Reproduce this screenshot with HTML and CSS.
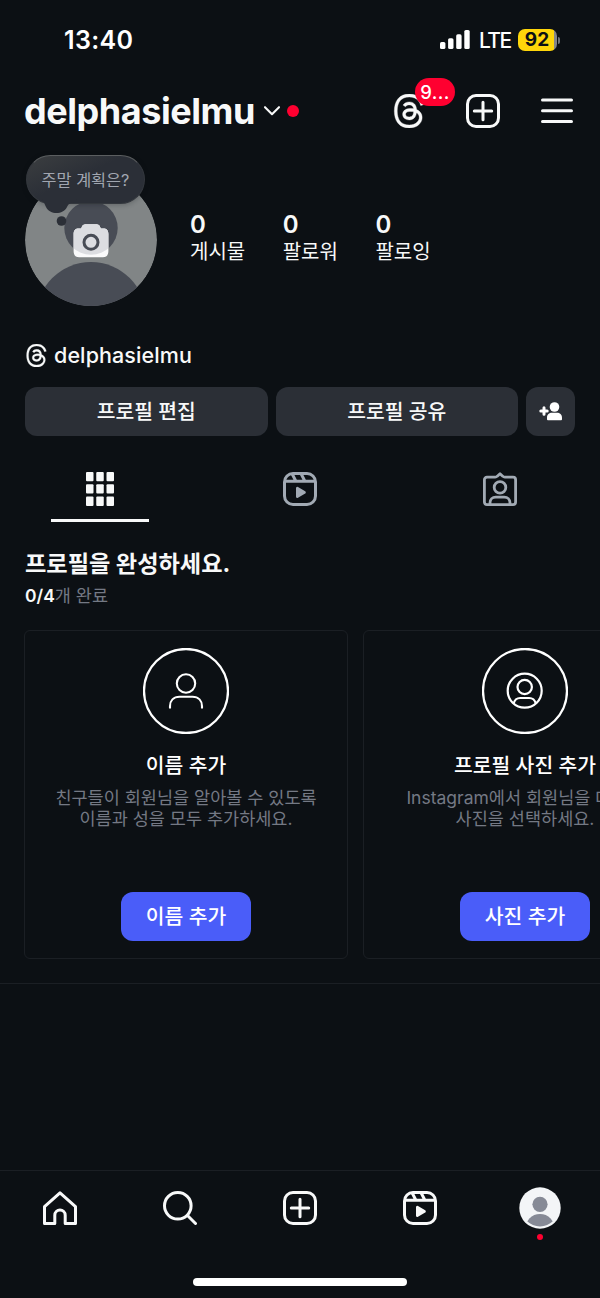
FILE: index.html
```html
<!DOCTYPE html>
<html lang="ko">
<head>
<meta charset="utf-8">
<title>delphasielmu</title>
<link rel="stylesheet" href="styles.css">
</head>
<body>
<svg class="defs" width="0" height="0" aria-hidden="true">
  <symbol id="threads" viewBox="0 0 192 192"><path d="M141.537 88.9883C140.71 88.5919 139.87 88.2104 139.019 87.8451C137.537 60.5382 122.616 44.905 97.5619 44.745C97.4484 44.7443 97.3355 44.7443 97.222 44.7443C82.2364 44.7443 69.7731 51.1409 62.102 62.7807L75.881 72.2328C81.6116 63.5383 90.6052 61.6848 97.2286 61.6848C97.3051 61.6848 97.3819 61.6848 97.4576 61.6855C105.707 61.7381 111.932 64.1366 115.961 68.814C118.893 72.2193 120.854 76.925 121.825 82.8638C114.511 81.6207 106.601 81.2385 98.145 81.7233C74.3247 83.0954 59.0111 96.9879 60.0396 116.292C60.5615 126.084 65.4397 134.508 73.775 140.011C80.8224 144.663 89.899 146.938 99.3323 146.423C111.79 145.74 121.563 140.987 128.381 132.296C133.559 125.696 136.834 117.143 138.28 106.366C144.217 109.949 148.617 114.664 151.047 120.332C155.179 129.967 155.42 145.8 142.501 158.708C131.182 170.016 117.576 174.908 97.0135 175.059C74.2042 174.89 56.9538 167.575 45.7381 153.317C35.2355 139.966 29.8077 120.682 29.6052 96C29.8077 71.3178 35.2355 52.0336 45.7381 38.6827C56.9538 24.4249 74.2039 17.11 97.0132 16.9405C119.988 17.1113 137.539 24.4614 149.184 38.788C154.894 45.8136 159.199 54.6488 162.037 64.9503L178.184 60.6422C174.744 47.9622 169.331 37.0357 161.965 27.974C147.036 9.60668 125.202 0.195148 97.0695 0H96.9569C68.8816 0.19447 47.2921 9.6418 32.7883 28.0793C19.8819 44.4864 13.2244 67.3157 13.0007 95.9325L13 96L13.0007 96.0675C13.2244 124.684 19.8819 147.514 32.7883 163.921C47.2921 182.358 68.8816 191.806 96.9569 192H97.0695C122.03 191.827 139.624 185.292 154.118 170.811C173.081 151.866 172.51 128.119 166.26 113.541C161.776 103.087 153.227 94.5962 141.537 88.9883ZM98.4405 129.507C88.0005 130.095 77.1544 125.409 76.6196 115.372C76.2232 107.93 81.9158 99.626 99.0812 98.6368C101.047 98.5234 102.976 98.468 104.871 98.468C111.106 98.468 116.939 99.0737 122.242 100.233C120.264 124.935 108.662 128.946 98.4405 129.507Z" fill="currentColor" stroke="currentColor" stroke-width="2"/></symbol>
  <symbol id="plus-box" viewBox="0 0 34 34"><g fill="none" stroke="currentColor" stroke-width="3"><rect x="1.5" y="1.5" width="31" height="31" rx="8.5"/><path d="M17 8.3v17.4M8.3 17h17.4" stroke-linecap="round"/></g></symbol>
  <symbol id="reels" viewBox="0 0 34 34"><g fill="none" stroke="currentColor" stroke-width="3"><rect x="1.5" y="1.5" width="31" height="31" rx="8.5"/><path d="M2 9.3h30M9.2 2l3.6 7M18.2 2l3.6 7"/></g><path d="M13 16.1v8.6a1.3 1.3 0 0 0 2 1.1l7.2-4.3a1.3 1.3 0 0 0 0-2.2L15 15a1.3 1.3 0 0 0-2 1.1z" fill="currentColor"/></symbol>
</svg>

<div class="screen">
  <div class="status">
    <span class="clock">13:40</span>
    <div class="status-right">
      <svg width="31" height="20" viewBox="0 0 31 20" fill="#fff"><rect x="0" y="12" width="5.4" height="7" rx="1.6"/><rect x="8.1" y="8.2" width="5.4" height="10.8" rx="1.6"/><rect x="16.2" y="4.3" width="5.4" height="14.7" rx="1.6"/><rect x="24.3" y="0" width="5.4" height="19" rx="1.6"/></svg>
      <span class="net">LTE</span>
      <div class="battery"><span class="level">92</span></div>
      <i class="battery-tip"></i>
    </div>
  </div>

  <header class="header">
    <h1 class="username">delphasielmu</h1>
    <svg class="chevron" width="18" height="12" viewBox="0 0 18 12" fill="none" stroke="#f8f9f9" stroke-width="2.1" stroke-linecap="round" stroke-linejoin="round"><path d="M2 2.2l7 7 7-7"/></svg>
    <i class="red-dot"></i>
    <div class="header-actions">
      <div class="threads-button">
        <svg width="34" height="34"><use href="#threads"/></svg>
        <span class="badge">9...</span>
      </div>
      <svg class="add" width="34" height="34"><use href="#plus-box"/></svg>
      <svg width="32" height="26" viewBox="0 0 32 26" stroke="#f8f9f9" stroke-width="3" stroke-linecap="round"><path d="M1.5 2h29M1.5 12.8h29M1.5 23.6h29"/></svg>
    </div>
  </header>

  <section class="profile">
    <div class="avatar">
      <svg width="132" height="132" viewBox="0 0 132 132">
        <defs>
          <clipPath id="disc"><circle cx="66" cy="66" r="66"/></clipPath>
          <clipPath id="head"><circle cx="66" cy="54" r="26.7"/></clipPath>
        </defs>
        <g clip-path="url(#disc)">
          <circle cx="66" cy="66" r="66" fill="#818586"/>
          <circle cx="66" cy="54" r="26.7" fill="#484c55"/>
          <circle cx="66" cy="142.8" r="54.8" fill="#484c55"/>
        </g>
        <path d="M54 54.5h2.2c1.2-3.6 2.2-4.2 5-4.2h9.6c2.8 0 3.8.6 5 4.2H78c4 0 5.400 2 5.400 5.500V77c0 4-1.8 6.2-5.6 6.2H54.2c-3.8 0-5.6-2.2-5.6-6.2V60c0-3.5 1.4-5.5 5.4-5.5z" fill="#fafafb"/>
        <path d="M54 54.5h2.2c1.2-3.6 2.2-4.2 5-4.2h9.600c2.8 0 3.8.6 5 4.2H78c4 0 5.4 2 5.4 5.5V77c0 4-1.8 6.2-5.6 6.2H54.2c-3.8 0-5.6-2.2-5.6-6.2V60c0-3.5 1.4-5.5 5.4-5.5z" fill="#dcdde1" clip-path="url(#head)"/>
        <circle cx="66" cy="68.3" r="7" fill="#dcdde1" stroke="#484c55" stroke-width="3"/>
      </svg>
      <div class="note">
        <svg class="note-tail" width="40" height="36" viewBox="0 0 40 36" fill="#2b2f37"><path d="M4 0C7 1 7 4 9 8c4 8 17 8 21 0 1.5-3 3-4.500 7-4.500L40 0z"/><circle cx="24.5" cy="22" r="4.8"/></svg>
        <span class="note-text">주말 계획은?</span>
      </div>
    </div>
    <dl class="stats">
      <div class="stat"><dd>0</dd><dt>게시물</dt></div>
      <div class="stat"><dd>0</dd><dt>팔로워</dt></div>
      <div class="stat"><dd>0</dd><dt>팔로잉</dt></div>
    </dl>
  </section>

  <div class="threads-link">
    <svg width="23" height="23"><use href="#threads"/></svg>
    <span>delphasielmu</span>
  </div>

  <div class="actions">
    <button class="button wide">프로필 편집</button>
    <button class="button wide">프로필 공유</button>
    <button class="button square">
      <svg width="24" height="20" viewBox="0 0 24 20" fill="#fff"><circle cx="15.5" cy="5" r="4.8"/><path d="M8 17.3v-1.500c0-3.2 2.2-5 5-5h5c2.8 0 5 1.8 5 5v1.500c0 .6-.3.9-.9.9H8.900c-.6 0-.9-.3-.9-.9z"/><path d="M5 5.800v6.400M1.800 9h6.400" stroke="#fff" stroke-width="3" stroke-linecap="round"/></svg>
    </button>
  </div>

  <nav class="tabs">
    <div class="tab active">
      <svg width="28" height="34" viewBox="0 0 28 34" fill="#f8f9f9"><rect width="7.5" height="9.3" rx="1"/><rect x="10.25" width="7.5" height="9.3" rx="1"/><rect x="20.5" width="7.5" height="9.3" rx="1"/><rect y="12.3" width="7.5" height="9.3" rx="1"/><rect x="10.25" y="12.3" width="7.5" height="9.3" rx="1"/><rect x="20.5" y="12.3" width="7.5" height="9.3" rx="1"/><rect y="24.6" width="7.5" height="9.3" rx="1"/><rect x="10.25" y="24.6" width="7.5" height="9.3" rx="1"/><rect x="20.5" y="24.6" width="7.5" height="9.3" rx="1"/></svg>
    </div>
    <div class="tab"><svg width="34" height="34"><use href="#reels"/></svg></div>
    <div class="tab">
      <svg width="34" height="34" viewBox="0 0 34 34" fill="none" stroke="currentColor" stroke-width="2.8" stroke-linejoin="round"><path d="M4 5.200h8.200c1 0 1.500-.3 2.100-1L17 1.700l2.700 2.500c.6.7 1.100 1 2.100 1H30c1.600 0 2.600 1 2.600 2.600V30c0 1.600-1 2.600-2.600 2.600H4c-1.600 0-2.600-1-2.600-2.600V7.800c0-1.600 1-2.600 2.600-2.600z"/><circle cx="17" cy="15.4" r="5.800"/><path d="M7 32v-1c0-3.600 2.400-5.800 5.800-5.800h8.400c3.400 0 5.800 2.200 5.800 5.800v1"/></svg>
    </div>
  </nav>

  <section class="complete">
    <h2>프로필을 완성하세요.</h2>
    <p class="progress"><b>0/4</b>개 완료</p>
    <div class="cards">
      <article class="card">
        <svg width="86" height="86" viewBox="0 0 86 86" fill="none" stroke="#fff" stroke-width="2.3"><circle cx="43" cy="43" r="42"/><g stroke-width="2.1"><circle cx="43" cy="35.500" r="9.200"/><path d="M27 60.500v-2.200c0-5.700 3.500-9.600 9.500-9.600h13c6 0 9.500 3.900 9.500 9.600v2.200"/></g></svg>
        <h3>이름 추가</h3>
        <p>친구들이 회원님을 알아볼 수 있도록<br>이름과 성을 모두 추가하세요.</p>
        <button class="cta">이름 추가</button>
      </article>
      <article class="card">
        <svg width="86" height="86" viewBox="0 0 86 86" fill="none" stroke="#fff" stroke-width="2.3"><circle cx="43" cy="43" r="42"/><g stroke-width="2.2"><circle cx="42.700" cy="42.700" r="17"/><circle cx="42.700" cy="39" r="7.200"/><path d="M31.700 55.300c1-3.600 3.500-5.300 6.500-5.300h9c3 0 5.500 1.700 6.500 5.300"/></g></svg>
        <h3>프로필 사진 추가</h3>
        <p>Instagram에서 회원님을 대표할<br>사진을 선택하세요.</p>
        <button class="cta">사진 추가</button>
      </article>
    </div>
  </section>

  <footer class="dock">
    <nav class="dock-items">
      <div class="dock-item"><svg width="34" height="34" viewBox="0 0 34 34" fill="none" stroke="currentColor" stroke-width="3" stroke-linejoin="round"><path d="M1.500 32.500V15.700L17 1.800l15.500 13.900v16.800H22.200v-8.300a5.200 5.200 0 0 0-10.400 0v8.300z"/></svg></div>
      <div class="dock-item"><svg width="34" height="34" viewBox="0 0 34 34" fill="none" stroke="currentColor" stroke-width="3" stroke-linecap="round"><circle cx="14.800" cy="14.800" r="13.300"/><path d="M24.500 24.500l8 8"/></svg></div>
      <div class="dock-item"><svg width="34" height="34"><use href="#plus-box"/></svg></div>
      <div class="dock-item"><svg width="34" height="34"><use href="#reels"/></svg></div>
      <div class="dock-item me">
        <svg width="42" height="42" viewBox="0 0 42 42"><clipPath id="me"><circle cx="21" cy="21" r="18.500"/></clipPath><circle cx="21" cy="21" r="20.700" fill="#f3f5f7"/><g clip-path="url(#me)" fill="#868a96"><circle cx="21" cy="17.300" r="7.600"/><circle cx="21" cy="42" r="15"/></g></svg>
        <i class="me-dot"></i>
      </div>
    </nav>
    <div class="home-bar"></div>
  </footer>
</div>
</body>
</html>
```
FILE: styles.css
```css
* { box-sizing: border-box; margin: 0; padding: 0; }
body {
  width: 600px;
  height: 1298px;
  overflow: hidden;
  background: #0c1014;
  color: #f8f9f9;
  font-family: Inter, "Noto Sans CJK KR", sans-serif;
}
.defs { position: absolute; }
svg { display: block; flex: none; }
button { border: 0; color: inherit; font-family: inherit; }
.screen { display: flex; flex-direction: column; width: 600px; height: 1298px; overflow: hidden; }

.status { display: flex; justify-content: space-between; align-items: center; height: 80px; padding: 0 40px 0 64px; }
.clock { font-size: 25px; font-weight: 600; letter-spacing: 0.35px; color: #fff; }
.status-right { display: flex; align-items: center; }
.net { width: 32px; margin: 1px 0 0 8px; font-size: 21px; font-weight: 500; letter-spacing: -1.6px; color: #fff; }
.battery { width: 39px; height: 22px; margin-left: 7px; border-radius: 7px; background: linear-gradient(90deg, #ffd60a 36px, #85868a 36px); }
.level { display: block; width: 38px; font-size: 19px; font-weight: 700; line-height: 22px; text-align: center; color: #0c1014; }
.battery-tip { width: 2px; height: 7px; margin-left: 1px; border-radius: 0 2px 2px 0; background: #73757a; }

.header { display: flex; align-items: center; height: 62px; padding: 0 27px 0 24px; }
.username { font-size: 36px; font-weight: 700; line-height: 44px; letter-spacing: -0.45px; }
.chevron { margin-left: 8px; }
.red-dot { width: 12px; height: 12px; margin-left: 6px; border-radius: 50%; background: #ff0030; }
.header-actions { display: flex; align-items: center; margin-left: auto; }
.threads-button { position: relative; }
.badge { position: absolute; left: 23px; top: -16px; width: 40px; height: 28px; border-radius: 14px; background: #ff0030; color: #fff; font-size: 18.5px; font-weight: 500; line-height: 28px; letter-spacing: 0.4px; text-align: center; }
.add { margin: 0 41px 0 40px; }

.profile { display: flex; height: 188px; padding: 32px 24px 0 25px; }
.avatar { position: relative; width: 132px; height: 132px; }
.note { position: absolute; left: 1px; top: -19px; width: 119px; height: 49px; border: 1px solid #34383e; border-top-color: #5b5e60; border-radius: 25px; background: linear-gradient(155deg, #3b3e40, #2b2f37 45%); text-align: center; box-shadow: 0 1px 5px rgba(12, 16, 20, 0.25); }
.note-tail { position: absolute; left: 10px; top: 43px; }
.note-text { position: relative; font-size: 16.3px; line-height: 48px; color: #a1a6b0; }
.stats { display: flex; padding: 37px 0 0 33px; }
.stat { width: 92.7px; }
.stat dd { font-size: 24px; font-weight: 600; line-height: 27px; }
.stat dt { font-size: 20px; line-height: 29px; }

.threads-link { display: flex; align-items: center; gap: 6px; height: 50px; padding: 0 25px; font-size: 21.5px; font-weight: 500; letter-spacing: 0.1px; }

.actions { display: flex; gap: 8px; height: 56px; padding: 7px 25px 0; }
.button { height: 49px; border-radius: 12px; background: #2b2f36; font-size: 20.4px; font-weight: 500; line-height: 49px; text-align: center; }
.wide { flex: 1; }
.square { display: flex; align-items: center; justify-content: center; width: 49px; }

.tabs { display: flex; height: 86px; }
.tab { position: relative; display: flex; flex: 1; justify-content: center; padding-top: 36px; color: #a2aab4; }
.active::after { content: ""; position: absolute; left: 51px; top: 83px; width: 98px; height: 3px; background: #f8f9f9; }

.complete { height: 462px; padding: 25px 0 0 24px; border-bottom: 1px solid #1b1f24; }
.complete h2 { padding-left: 1px; font-size: 23.2px; font-weight: 700; line-height: 34px; }
.progress { margin-top: 2px; padding-left: 1px; font-size: 17.5px; line-height: 26px; color: #747984; }
.progress b { font-weight: 600; color: #f8f9f9; }
.cards { display: flex; gap: 15px; margin-top: 21px; }
.card { display: flex; flex: none; flex-direction: column; align-items: center; width: 324px; height: 329px; padding: 17px 0; border: 1px solid #1b1f24; border-radius: 6px; text-align: center; white-space: nowrap; }
.card h3 { margin-top: 17px; font-size: 20.4px; font-weight: 500; line-height: 30px; color: #fff; }
.card p { margin-top: 6px; font-size: 17.5px; line-height: 21px; color: #747984; }
.cta { width: 130px; height: 49px; margin-top: auto; border-radius: 12px; background: #4a5df9; font-size: 20.4px; font-weight: 500; line-height: 49px; color: #fff; }

.dock { height: 128px; margin-top: auto; border-top: 1px solid #1b1f24; }
.dock-items { display: flex; height: 74px; }
.dock-item { position: relative; display: flex; flex: 1; align-items: center; justify-content: center; color: #f8f9f9; }
.me-dot { position: absolute; left: 57px; top: 63px; width: 6px; height: 6px; border-radius: 50%; background: #ff0030; }
.home-bar { width: 214px; height: 8px; margin: 33px auto 0; border-radius: 4px; background: #fff; }
```
